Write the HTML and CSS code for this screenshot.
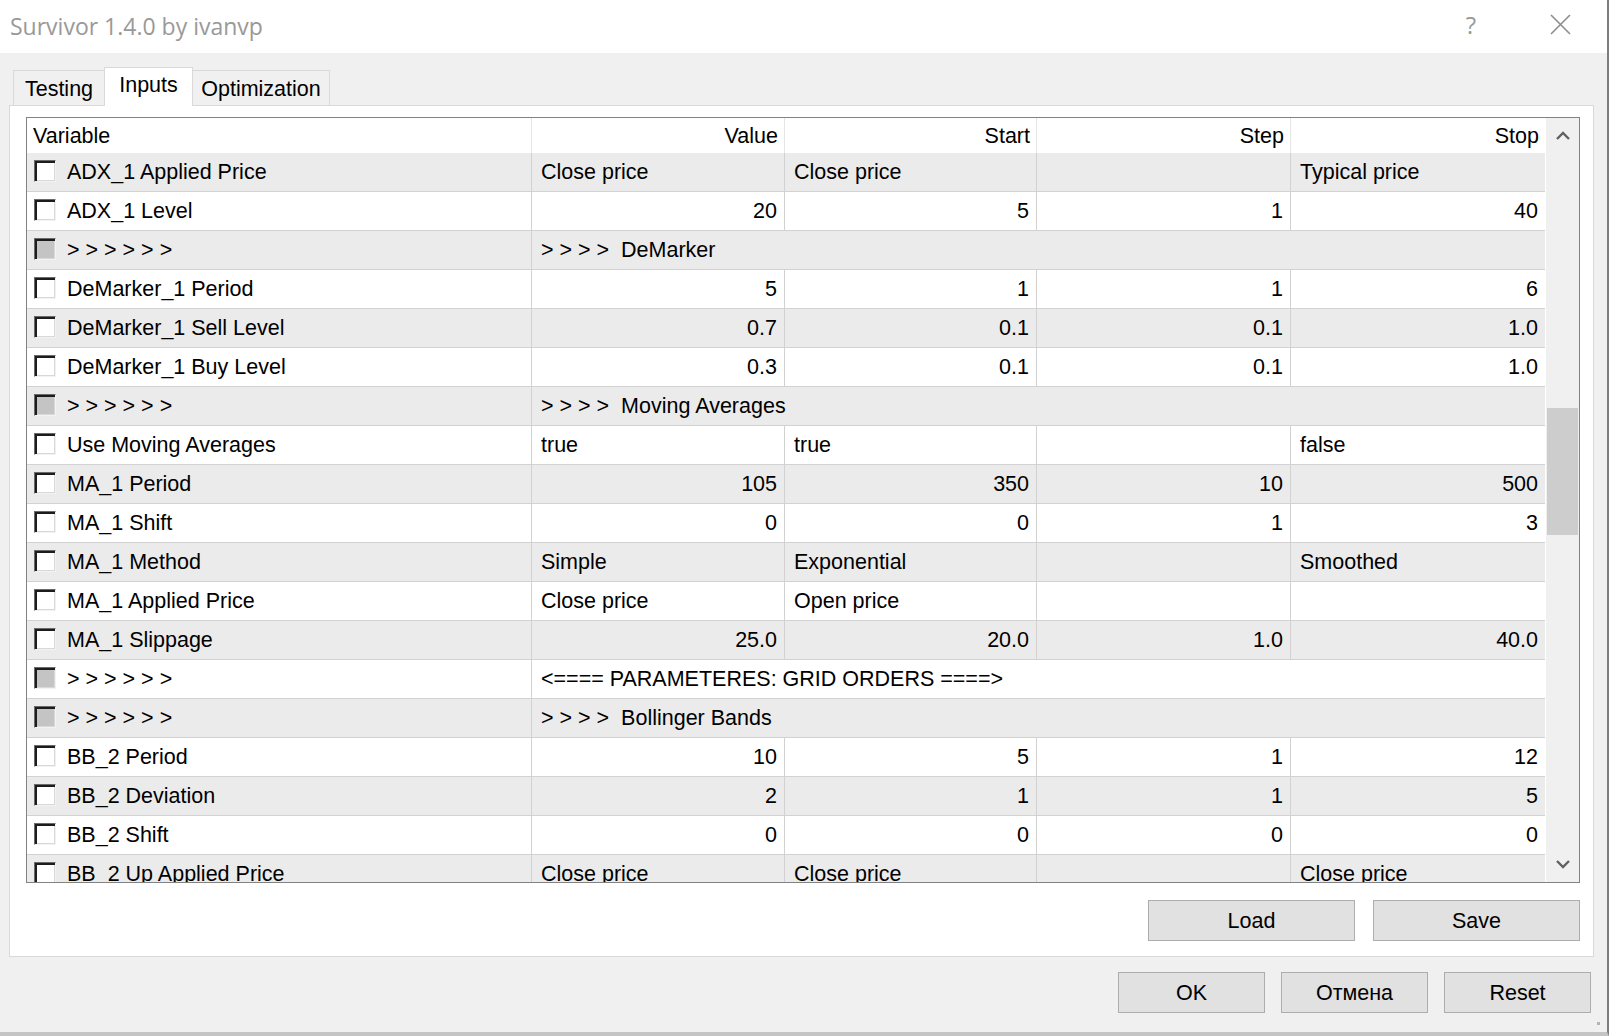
FILE: index.html
```html
<!DOCTYPE html>
<html lang="en">
<head>
  <meta charset="UTF-8" />
  <title>Survivor 1.4.0 by ivanvp</title>
  <link rel="stylesheet" href="styles.css">
</head>
<body>

<div class="window">
  <div class="titlebar">
    <span class="title">Survivor 1.4.0 by ivanvp</span>
    <span class="help">?</span>
    <svg class="close" width="21" height="21" viewBox="0 0 21 21">
      <path d="M1 1 L20 20 M20 1 L1 20" stroke="#8c8c8c" stroke-width="1.6" fill="none"/>
    </svg>
  </div>

  <div class="tabs">
    <div class="tab tab-testing">Testing</div>
    <div class="tab tab-inputs active">Inputs</div>
    <div class="tab tab-optim">Optimization</div>
  </div>

  <div class="panel">
    <div class="grid-box">
      <div class="grid">
        <div class="row head">
          <div class="cell">Variable</div>
          <div class="cell num">Value</div>
          <div class="cell num">Start</div>
          <div class="cell num">Step</div>
          <div class="cell num">Stop</div>
        </div>

        <div class="row">
          <div class="cell var"><span class="chk"></span>ADX_1 Applied Price</div>
          <div class="cell">Close price</div>
          <div class="cell">Close price</div>
          <div class="cell"></div>
          <div class="cell">Typical price</div>
        </div>
        <div class="row">
          <div class="cell var"><span class="chk"></span>ADX_1 Level</div>
          <div class="cell num">20</div>
          <div class="cell num">5</div>
          <div class="cell num">1</div>
          <div class="cell num">40</div>
        </div>
        <div class="row">
          <div class="cell var"><span class="chk off"></span>&gt; &gt; &gt; &gt; &gt; &gt;</div>
          <div class="cell span">&gt; &gt; &gt; &gt;  DeMarker</div>
        </div>
        <div class="row">
          <div class="cell var"><span class="chk"></span>DeMarker_1 Period</div>
          <div class="cell num">5</div>
          <div class="cell num">1</div>
          <div class="cell num">1</div>
          <div class="cell num">6</div>
        </div>
        <div class="row">
          <div class="cell var"><span class="chk"></span>DeMarker_1 Sell Level</div>
          <div class="cell num">0.7</div>
          <div class="cell num">0.1</div>
          <div class="cell num">0.1</div>
          <div class="cell num">1.0</div>
        </div>
        <div class="row">
          <div class="cell var"><span class="chk"></span>DeMarker_1 Buy Level</div>
          <div class="cell num">0.3</div>
          <div class="cell num">0.1</div>
          <div class="cell num">0.1</div>
          <div class="cell num">1.0</div>
        </div>
        <div class="row">
          <div class="cell var"><span class="chk off"></span>&gt; &gt; &gt; &gt; &gt; &gt;</div>
          <div class="cell span">&gt; &gt; &gt; &gt;  Moving Averages</div>
        </div>
        <div class="row">
          <div class="cell var"><span class="chk"></span>Use Moving Averages</div>
          <div class="cell">true</div>
          <div class="cell">true</div>
          <div class="cell"></div>
          <div class="cell">false</div>
        </div>
        <div class="row">
          <div class="cell var"><span class="chk"></span>MA_1 Period</div>
          <div class="cell num">105</div>
          <div class="cell num">350</div>
          <div class="cell num">10</div>
          <div class="cell num">500</div>
        </div>
        <div class="row">
          <div class="cell var"><span class="chk"></span>MA_1 Shift</div>
          <div class="cell num">0</div>
          <div class="cell num">0</div>
          <div class="cell num">1</div>
          <div class="cell num">3</div>
        </div>
        <div class="row">
          <div class="cell var"><span class="chk"></span>MA_1 Method</div>
          <div class="cell">Simple</div>
          <div class="cell">Exponential</div>
          <div class="cell"></div>
          <div class="cell">Smoothed</div>
        </div>
        <div class="row">
          <div class="cell var"><span class="chk"></span>MA_1 Applied Price</div>
          <div class="cell">Close price</div>
          <div class="cell">Open price</div>
          <div class="cell"></div>
          <div class="cell"></div>
        </div>
        <div class="row">
          <div class="cell var"><span class="chk"></span>MA_1 Slippage</div>
          <div class="cell num">25.0</div>
          <div class="cell num">20.0</div>
          <div class="cell num">1.0</div>
          <div class="cell num">40.0</div>
        </div>
        <div class="row">
          <div class="cell var"><span class="chk off"></span>&gt; &gt; &gt; &gt; &gt; &gt;</div>
          <div class="cell span">&lt;==== PARAMETERES: GRID ORDERS ====&gt;</div>
        </div>
        <div class="row">
          <div class="cell var"><span class="chk off"></span>&gt; &gt; &gt; &gt; &gt; &gt;</div>
          <div class="cell span">&gt; &gt; &gt; &gt;  Bollinger Bands</div>
        </div>
        <div class="row">
          <div class="cell var"><span class="chk"></span>BB_2 Period</div>
          <div class="cell num">10</div>
          <div class="cell num">5</div>
          <div class="cell num">1</div>
          <div class="cell num">12</div>
        </div>
        <div class="row">
          <div class="cell var"><span class="chk"></span>BB_2 Deviation</div>
          <div class="cell num">2</div>
          <div class="cell num">1</div>
          <div class="cell num">1</div>
          <div class="cell num">5</div>
        </div>
        <div class="row">
          <div class="cell var"><span class="chk"></span>BB_2 Shift</div>
          <div class="cell num">0</div>
          <div class="cell num">0</div>
          <div class="cell num">0</div>
          <div class="cell num">0</div>
        </div>
        <div class="row">
          <div class="cell var"><span class="chk"></span>BB_2 Up Applied Price</div>
          <div class="cell">Close price</div>
          <div class="cell">Close price</div>
          <div class="cell"></div>
          <div class="cell">Close price</div>
        </div>
      </div>

      <div class="vscroll">
        <div class="arrow">
          <svg width="14" height="9" viewBox="0 0 14 9"><path d="M1 8 L7 2 L13 8" stroke="#606060" stroke-width="2.4" fill="none"/></svg>
        </div>
        <div class="track"><div class="thumb"></div></div>
        <div class="arrow">
          <svg width="14" height="9" viewBox="0 0 14 9"><path d="M1 1 L7 7 L13 1" stroke="#606060" stroke-width="2.4" fill="none"/></svg>
        </div>
      </div>
    </div>

    <div class="panel-buttons">
      <button>Load</button>
      <button>Save</button>
    </div>
  </div>

  <div class="dialog-buttons">
    <button>OK</button>
    <button>Отмена</button>
    <button>Reset</button>
  </div>

  <div class="grip"></div>
</div>

</body>
</html>
```

FILE: styles.css
```css
* {
  box-sizing: border-box;
}

body {
  margin: 0;
  background: #f0f0f0;
  font-family: 'Liberation Sans', Arial, sans-serif;
  font-size: 21.5px;
  color: #000;
}

.window {
  position: relative;
  width: 1609px;
  height: 1036px;
  border-right: 2px solid #7d7d7d;
  border-bottom: 4px solid #c4c4c4;
  overflow: hidden;
}

/* title bar */
.titlebar {
  height: 53px;
  background: #fff;
  display: flex;
  align-items: center;
  padding: 0 36px 0 10px;
}

.title {
  flex: 1;
  font-family: 'Open Sans', sans-serif;
  font-size: 23px;
  color: #999;
  margin-top: -2px;
}

.help {
  font-family: 'Open Sans', sans-serif;
  font-size: 24px;
  color: #999;
  margin-right: 74px;
  margin-top: -4px;
}

.close {
  display: block;
  margin-top: -4px;
}

/* tabs */
.tabs {
  height: 52px;
  display: flex;
  align-items: flex-end;
  padding-left: 13px;
}

.tab {
  height: 35px;
  display: flex;
  align-items: center;
  justify-content: center;
  border: 1px solid #d9d9d9;
  border-bottom: none;
  background: #f0f0f0;
  padding-top: 2px;
}

.tab-testing { width: 91px; border-right: none; }
.tab-inputs { width: 89px; }
.tab-optim { width: 137px; border-left: none; }

.tab.active {
  position: relative;
  z-index: 1;
  height: 39px;
  margin-bottom: -1px;
  background: #fff;
  padding-top: 0;
  padding-bottom: 4px;
}

/* white page with the inputs grid */
.panel {
  margin-left: 9px;
  width: 1585px;
  height: 852px;
  border: 1px solid #d9d9d9;
  background: #fff;
  padding: 11px 13px 0 16px;
}

.grid-box {
  height: 766px;
  border: 1px solid #828282;
  display: flex;
}

.grid {
  width: 1518px;
  overflow: hidden;
}

.row {
  display: grid;
  grid-template-columns: 505px 253px 252px 254px 254px;
  height: 39px;
  border-bottom: 1px solid #d2d2d2;
}

.grid .row:nth-child(even) {
  background: #ebebeb;
}

.row.head {
  height: 35px;
  border-bottom: none;
}

.cell {
  display: flex;
  align-items: center;
  padding: 0 7px 0 9px;
  border-right: 1px solid #d2d2d2;
  white-space: pre;
  overflow: hidden;
}

.cell:last-child {
  border-right: none;
}

.head .cell {
  border-right-color: #e6e6e6;
  padding: 2px 6px 0 6px;
}

.head .cell:last-child {
  border-right: none;
}

.cell.num {
  justify-content: flex-end;
}

.cell.var {
  padding-left: 7px;
}

.cell.span {
  grid-column: 2 / -1;
}

.chk {
  width: 22px;
  height: 22px;
  margin-right: 11px;
  flex: none;
  background: #fff;
  border: 1px solid;
  border-color: #6a6a6a #f2f2f2 #f2f2f2 #6a6a6a;
  box-shadow: inset 2px 2px 0 #1c1c1c, inset -1px -1px 0 #d8d8d8;
  margin-top: -2px;
}

.chk.off {
  background: #c4c4c4;
}

/* scrollbar */
.vscroll {
  width: 34px;
  background: #f0f0f0;
  border-left: 1px solid #fff;
  display: flex;
  flex-direction: column;
}

.arrow {
  height: 35px;
  display: flex;
  align-items: center;
  justify-content: center;
}

.track {
  flex: 1;
}

.thumb {
  margin: 255px 1px 0 1px;
  height: 127px;
  background: #cdcdcd;
}

/* buttons */
button {
  font-family: inherit;
  font-size: 21.5px;
  color: #000;
  background: #e1e1e1;
  border: 1px solid #adadad;
  padding: 2px 0 0;
  height: 41px;
}

.panel-buttons {
  display: flex;
  justify-content: flex-end;
  gap: 18px;
  margin-top: 17px;
}

.panel-buttons button {
  width: 207px;
}

.dialog-buttons {
  display: flex;
  justify-content: flex-end;
  gap: 16px;
  margin-top: 15px;
  padding-right: 16px;
}

.dialog-buttons button {
  width: 147px;
}

.grip {
  position: absolute;
  right: 7px;
  bottom: 7px;
  width: 3px;
  height: 3px;
  background: #b4b4b4;
}
```
